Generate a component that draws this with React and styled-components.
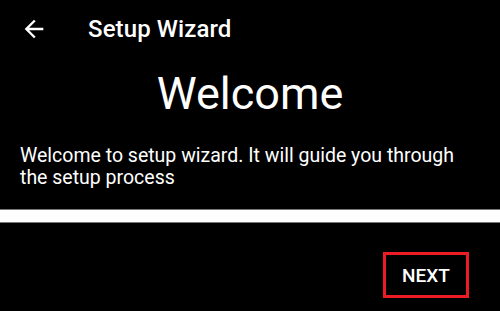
import React from "react";
import styled, { createGlobalStyle } from "styled-components";

const GlobalStyle = createGlobalStyle`
  html, body {
    margin: 0;
    padding: 0;
    background: #000;
  }
  body {
    font-family: Roboto, "Liberation Sans", sans-serif;
    color: #fff;
  }
`;

const Screen = styled.div`
  width: 500px;
  height: 311px;
  background: #000;
  display: flex;
  flex-direction: column;
  overflow: hidden;
`;

const TopBar = styled.div`
  height: 58px;
  display: flex;
  align-items: center;
  padding-left: 20px;
`;

const BackButton = styled.button`
  width: 28px;
  height: 28px;
  padding: 0;
  border: none;
  background: none;
  display: flex;
  align-items: center;
  justify-content: center;
  margin-right: 40px;
`;

const BarTitle = styled.h1`
  margin: 0;
  font-size: 24px;
  font-weight: 500;
  letter-spacing: 0.1px;
`;

const Heading = styled.h2`
  margin: 6px 0 0;
  text-align: center;
  font-size: 45px;
  font-weight: 400;
  line-height: 60px;
`;

const Intro = styled.p`
  margin: 21px 20px 0;
  font-size: 19.5px;
  line-height: 22px;
`;

const Progress = styled.div`
  margin-top: 20px;
  height: 12px;
  background: #fff;
  border-top: 1px solid #777;
  border-bottom: 1px solid #777;
`;

const Footer = styled.div`
  display: flex;
  justify-content: flex-end;
  padding: 29px 31px 0 0;
`;

const NextButton = styled.button`
  width: 86px;
  height: 46px;
  border: 3px solid #ec1c24;
  background: none;
  color: #fff;
  font-family: Roboto, "Liberation Sans", sans-serif;
  font-size: 19px;
  font-weight: 500;
  padding: 0;
`;

export default function App() {
  return (
    <Screen>
      <GlobalStyle />
      <TopBar>
        <BackButton aria-label="Back">
          <svg width="28" height="28" viewBox="0 0 24 24">
            <path
              d="M20 11H7.83l5.59-5.59L12 4l-8 8 8 8 1.41-1.41L7.83 13H20v-2z"
              fill="#fff"
            />
          </svg>
        </BackButton>
        <BarTitle>Setup Wizard</BarTitle>
      </TopBar>
      <Heading>Welcome</Heading>
      <Intro>
        Welcome to setup wizard. It will guide you through the setup process
      </Intro>
      <Progress />
      <Footer>
        <NextButton>NEXT</NextButton>
      </Footer>
    </Screen>
  );
}
